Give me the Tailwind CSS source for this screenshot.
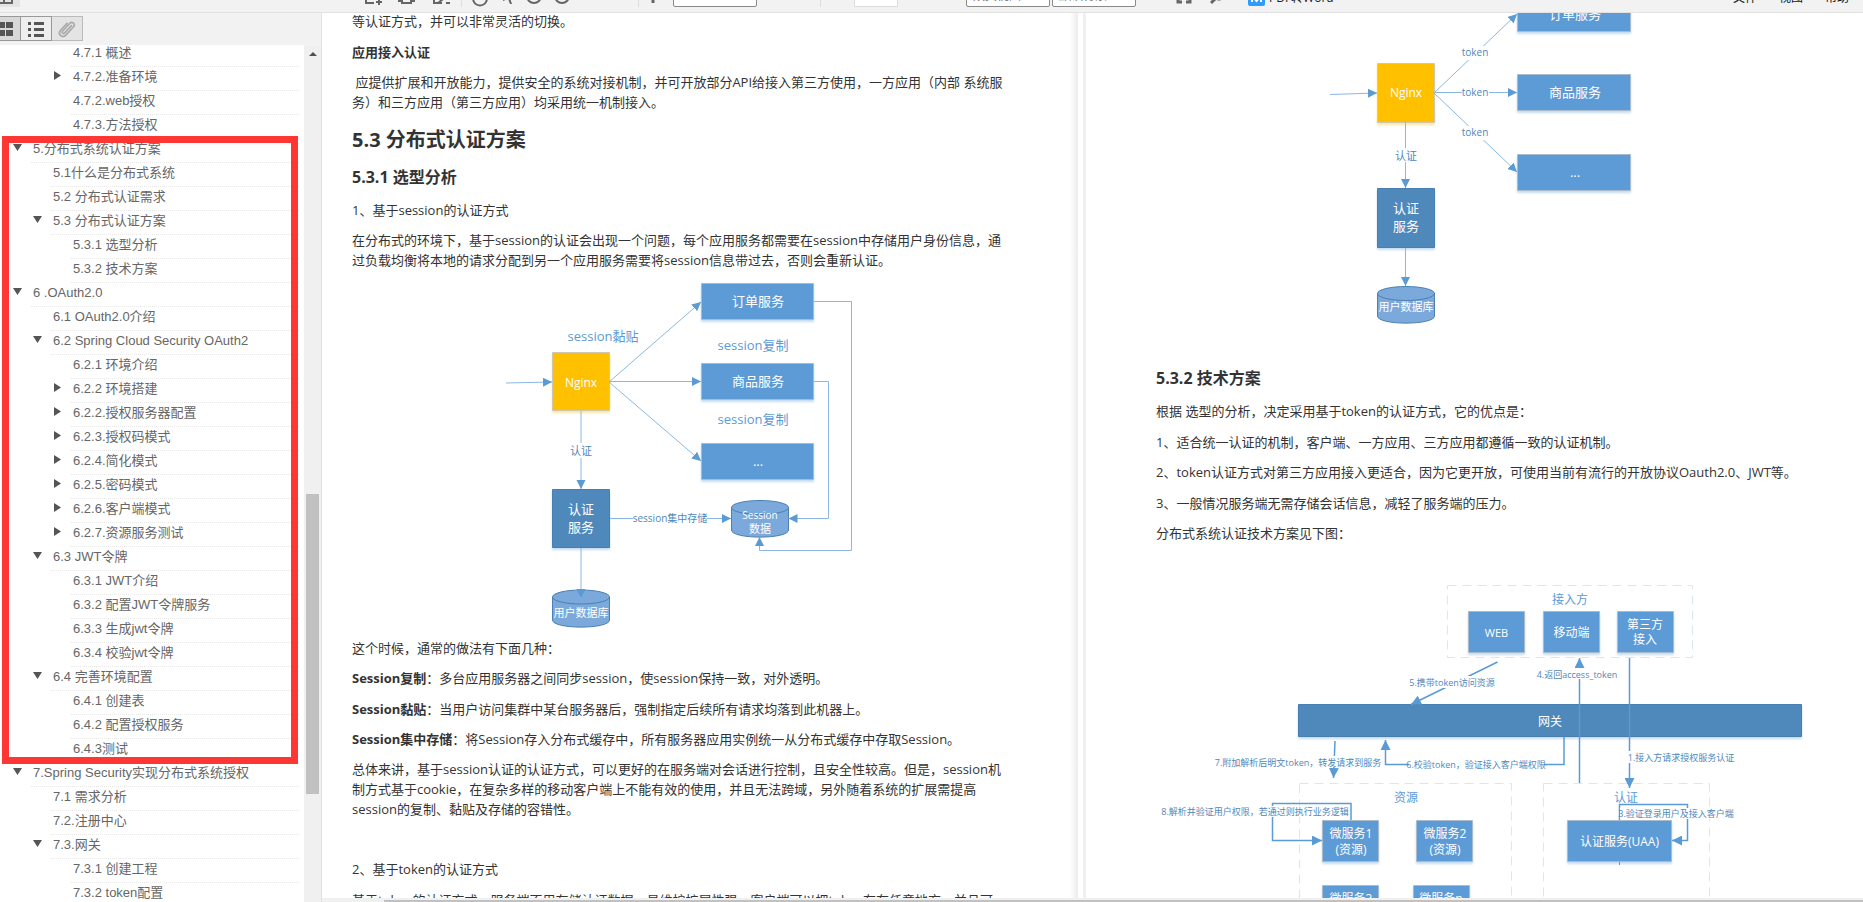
<!DOCTYPE html>
<html lang="zh-CN">
<head>
<meta charset="utf-8">
<title>PDF 阅读器</title>
<script src="https://cdn.jsdelivr.net/npm/@tailwindcss/browser@4"></script>
</head>
<body class="flex h-screen flex-col overflow-hidden bg-white font-['Open_Sans','Noto_Sans_CJK_SC',sans-serif] text-[13px] leading-5 text-[#333]">

<header class="flex h-[13px] shrink-0 items-end overflow-hidden border-b border-[#e2e2e2] bg-[#f2f2f2] text-[#666]">
  <div class="flex h-8 w-full shrink-0 items-end pb-[5px]">
    <button aria-label="侧边栏" class="flex h-7 w-5 items-end bg-[#e4e4e4] pb-[3px]"><svg class="h-4 w-[13px]" viewBox="0 0 13 16" fill="none" stroke="#666" stroke-width="2"><path d="M-3 2H12V15H-3M4 2V15"/></svg></button>
    <button aria-label="打开" class="ml-[345px]"><svg class="h-5 w-[18px]" viewBox="0 0 18 20" fill="none" stroke="#666" stroke-width="2"><path d="M9 16H1V4H8M14 10V18M11 15H17"/></svg></button>
    <button aria-label="打印" class="ml-[15px]"><svg class="h-5 w-[17px]" viewBox="0 0 17 20" fill="none" stroke="#666" stroke-width="2"><path d="M4 14H1V8H16V14H13M4 12H13V16H4Z"/></svg></button>
    <button aria-label="编辑" class="ml-[18px]"><svg class="h-5 w-[17px]" viewBox="0 0 17 20" fill="none" stroke="#666" stroke-width="2"><path d="M9 16H1V4H12M5 16L14 9M13 16H17"/></svg></button>
    <span class="ml-[11px] h-5 w-px bg-[#dcdcdc]"></span>
    <button aria-label="手型工具" class="ml-[10px]"><svg class="h-5 w-4" viewBox="0 0 16 20" fill="none" stroke="#666" stroke-width="2"><path d="M1 5V11C1 21 15 21 15 11V5"/></svg></button>
    <button aria-label="选择" class="ml-[15px]"><svg class="h-5 w-[10px]" viewBox="0 0 10 20" fill="#666"><path d="M0 0L10 10L7 11L9 17L7 17L5 12L0 14Z"/></svg></button>
    <button aria-label="缩小" class="ml-[13px]"><svg class="h-5 w-4" viewBox="0 0 16 20" fill="none" stroke="#666" stroke-width="2"><circle cx="8" cy="9" r="7"/></svg></button>
    <button aria-label="放大" class="ml-3"><svg class="h-5 w-4" viewBox="0 0 16 20" fill="none" stroke="#666" stroke-width="2"><circle cx="8" cy="9" r="7"/></svg></button>
    <span class="ml-[68px] h-5 w-px bg-[#dcdcdc]"></span>
    <button aria-label="上一页" class="ml-[11px]"><svg class="h-5 w-[6px]" viewBox="0 0 6 20" fill="none" stroke="#666" stroke-width="3"><path d="M3 4V16"/></svg></button>
    <input aria-label="页码" class="ml-[17px] h-[22px] w-[84px] rounded-xs border border-[#8a8a8a] bg-white">
    <span class="ml-[63px] h-5 w-px bg-[#dcdcdc]"></span>
    <input aria-label="缩放" class="ml-[33px] h-[22px] w-11 border border-[#ddd] bg-white">
    <select aria-label="视图" class="ml-[68px] h-[22px] w-[84px] appearance-none rounded-xs border border-[#8a8a8a] bg-white px-1.5 text-[12px]"><option>双页视图</option></select>
    <select aria-label="背景" class="ml-[2px] h-[22px] w-[84px] appearance-none rounded-xs border border-[#8a8a8a] bg-white px-1.5 text-[12px]"><option>默认背景</option></select>
    <button aria-label="全屏" class="ml-10"><svg class="h-5 w-4" viewBox="0 0 16 20" fill="none" stroke="#666" stroke-width="3"><path d="M6 15H2V9M10 15H14V9"/></svg></button>
    <button aria-label="查找" class="ml-[18px]"><svg class="h-5 w-[14px]" viewBox="0 0 14 20" fill="none" stroke="#666" stroke-width="3"><path d="M1 16L6 11"/><circle cx="9" cy="8" r="4"/></svg></button>
    <button class="ml-6 flex items-end gap-1 pb-px text-[12px] leading-4 text-[#222]"><svg class="h-[17px] w-[17px] rounded-xs" viewBox="0 0 17 17"><path fill="#2f9bff" d="M0 0H17V17H0Z"/><path d="M4 13V7L8.500 12L13 7V13" fill="none" stroke="#fff" stroke-width="2"/></svg>PDF转Word</button>
    <nav class="ml-auto flex gap-[22px] pr-[14px] pb-px text-[12px] leading-4 text-[#111]"><a href="#">文件</a><a href="#">视图</a><a href="#">帮助</a></nav>
  </div>
</header>

<div class="flex min-h-0 flex-1">
  <!-- Outline sidebar -->
  <aside class="relative flex w-[322px] shrink-0 flex-col border-r border-[#e2e2e2]">
    <div class="flex h-8 shrink-0 bg-[#f2f2f2] pt-[3px]">
      <button aria-label="缩略图" class="flex h-[25px] w-[21px] items-center border border-l-0 border-[#999] bg-[#d8d8d8]"><svg class="h-4 w-[14px]" viewBox="0 0 14 16" fill="#555"><path d="M-2 1H5V7H-2ZM6 1H13V7H6ZM-2 9H5V15H-2ZM6 9H13V15H6Z"/></svg></button>
      <button aria-label="目录" class="flex h-[25px] w-[31px] items-center justify-center border border-l-0 border-[#999] bg-[#eee]"><svg class="h-4 w-4" viewBox="0 0 16 16" fill="#555"><path d="M0 1H3V4H0ZM6 1H16V4H6ZM0 7H3V10H0ZM6 7H16V10H6ZM0 13H3V16H0ZM6 13H16V16H6Z"/></svg></button>
      <button aria-label="附件" class="flex h-[25px] w-[31px] items-center justify-center border border-l-0 border-[#bbb] bg-[#e4e4e4]"><svg class="h-[18px] w-[18px]" viewBox="0 0 16 16" fill="none" stroke="#aaa" stroke-width="1.500" stroke-linecap="round"><path d="M12 5L6 11.500C4.500 13 2.800 11.200 4 10L10.500 3C12.500 1 15.800 3.500 13.800 6L7 13.500C4 16.500 -.5 13 2 9.500L8 3"/></svg></button>
    </div>
    <div class="flex min-h-0 flex-1">
      <nav aria-label="目录" class="min-w-0 flex-1 overflow-hidden">
        <ul id="tree" class="-mt-0.5 font-['Liberation_Sans','Noto_Sans_CJK_SC',sans-serif] text-[13px] leading-5 text-[#666]"></ul>
      </nav>
      <div class="flex w-[17px] flex-col items-center bg-[#f0f0f0]">
        <svg class="mt-[7px] h-1 w-2 shrink-0" viewBox="0 0 8 4"><path d="M0 4L4 0L8 4Z" fill="#505050"/></svg>
        <div class="mt-[438px] h-[300px] w-[13px] bg-[#c1c1c1]"></div>
      </div>
    </div>
    <div class="pointer-events-none absolute top-[123px] left-[2px] h-[628px] w-[296px] border-7 border-[#fe3735]"></div>
  </aside>

  <!-- Two page spread -->
  <main class="flex min-w-0 flex-1 flex-col">
    <div class="grid min-h-0 flex-1 grid-cols-[756fr_8px_777fr] grid-rows-[minmax(0,1fr)] overflow-hidden">
      <article class="min-w-0 overflow-hidden bg-linear-to-l from-[#ececec] to-white to-[8px] pl-[30px] whitespace-nowrap">
        <p class="-mt-0.5">等认证方式，并可以非常灵活的切换。</p>
        <p class="mt-[11px] font-bold">应用接入认证</p>
        <p class="mt-2.5">&nbsp;应提供扩展和开放能力，提供安全的系统对接机制，并可开放部分API给接入第三方使用，一方应用（内部 系统服<br>务）和三方应用（第三方应用）均采用统一机制接入。</p>
        <h2 class="mt-[14px] text-[20px] leading-7 font-bold">5.3 分布式认证方案</h2>
        <h3 class="mt-[11px] text-[16px] leading-6 font-bold">5.3.1 选型分析</h3>
        <p class="mt-[11px]">1、基于session的认证方式</p>
        <p class="mt-2.5">在分布式的环境下，基于session的认证会出现一个问题，每个应用服务都需要在session中存储用户身份信息，通<br>过负载均衡将本地的请求分配到另一个应用服务需要将session信息带过去，否则会重新认证。</p>

        <svg class="mt-2.5 h-[350px] w-[649px]" viewBox="352 281 649 350" text-anchor="middle" dominant-baseline="central">
          <defs>
            <marker id="head" markerUnits="userSpaceOnUse" markerWidth="10" markerHeight="10" refX="9" refY="4.500" orient="auto"><path d="M0 0L9 4.500L0 9Z" fill="#5b9bd5"/></marker>
            <marker id="head2" markerUnits="userSpaceOnUse" markerWidth="10" markerHeight="10" refX="10" refY="5" orient="auto"><path d="M0 0L10 5L0 10Z" fill="#5b9bd5"/></marker>
            <filter id="sh" x="-10%" y="-10%" width="120%" height="130%"><feDropShadow dx="0" dy="2" stdDeviation="1" flood-color="#5b9bd5" flood-opacity=".35"/></filter>
            <filter id="shy" x="-10%" y="-10%" width="120%" height="130%"><feDropShadow dx="0" dy="2" stdDeviation="1" flood-color="#ffc000" flood-opacity=".4"/></filter>
          </defs>
          <g fill="#5b9bd5" stroke="#a9bccd" filter="url(#sh)">
            <path d="M701.500 284.500h112v36h-112ZM701.500 364.500h112v36h-112ZM701.500 444.500h112v36h-112Z"/>
            <path d="M552.500 490.500h57v58h-57Z" fill="#4f88bb" stroke="#4a7eb0"/>
          </g>
          <path d="M552.500 353.500h57v58h-57Z" fill="#ffc000" stroke="#cfc7b0" filter="url(#shy)"/>
          <g fill="#7ba9db" stroke="#4a80b3">
            <path d="M552.500 598V621C552.500 630.500 609.500 630.500 609.500 621V598"/><ellipse cx="581" cy="598" rx="28.500" ry="7"/>
            <path d="M731.500 508V531C731.500 540.500 788.500 540.500 788.500 531V508"/><ellipse cx="760" cy="508.500" rx="28.500" ry="7"/>
          </g>
          <g fill="none" stroke="#8ab8e2" marker-end="url(#head)">
            <path d="M506 384L552 383"/><path d="M609 383L701 303"/><path d="M609 382.500H701"/><path d="M609 383L701 462"/>
            <path d="M581 412V490"/><path d="M581 549V599"/><path d="M610 519.500H731"/>
            <path d="M814 302.500H851.500V551.500H759.500V538"/><path d="M814 382.500H828.500V519.500H788.500"/>
          </g>
          <g fill="#fff"><path d="M569 444h24v15h-24ZM633 513h74v13h-74Z"/></g>
          <g fill="#fff" font-size="13">
            <text x="758" y="302">订单服务</text><text x="758" y="382">商品服务</text><text x="758" y="462">...</text>
            <text x="581" y="383" font-size="12">Nginx</text>
            <text x="581" y="510">认证</text><text x="581" y="528">服务</text>
            <text x="581" y="613" font-size="11">用户数据库</text><text x="760" y="516" font-size="10">Session</text><text x="760" y="529" font-size="11">数据</text>
          </g>
          <g fill="#5b9bd5" font-size="13"><text x="603" y="337">session黏贴</text><text x="753" y="346">session复制</text><text x="753" y="420">session复制</text></g>
          <g fill="#4f88bb"><text x="581" y="451" font-size="11">认证</text><text x="670" y="519" font-size="10">session集中存储</text></g>
        </svg>

        <p class="mt-2">这个时候，通常的做法有下面几种：</p>
        <p class="mt-2.5"><b>Session复制</b>：多台应用服务器之间同步session，使session保持一致，对外透明。</p>
        <p class="mt-[11px]"><b>Session黏贴</b>：当用户访问集群中某台服务器后，强制指定后续所有请求均落到此机器上。</p>
        <p class="mt-2.5"><b>Session集中存储</b>：将Session存入分布式缓存中，所有服务器应用实例统一从分布式缓存中存取Session。</p>
        <p class="mt-2.5">总体来讲，基于session认证的认证方式，可以更好的在服务端对会话进行控制，且安全性较高。但是，session机<br>制方式基于cookie，在复杂多样的移动客户端上不能有效的使用，并且无法跨域，另外随着系统的扩展需提高<br>session的复制、黏贴及存储的容错性。</p>
        <p class="mt-10">2、基于token的认证方式</p>
        <p class="mt-[11px]">基于token的认证方式，服务端不用存储认证数据，易维护扩展性强，客户端可以把token存在任意地方，并且可</p>
      </article>

      <div class="border-r-3 border-[#f0f0f0]"></div>

      <article class="min-w-0 overflow-hidden pl-[70px] whitespace-nowrap">
        <svg class="h-[315px] w-[654px]" viewBox="1156 13 654 315" text-anchor="middle" dominant-baseline="central">
          <g fill="#5b9bd5" stroke="#a9bccd" filter="url(#sh)">
            <path d="M1517.500 -5.500h113v37h-113ZM1517.500 74.500h113v36h-113ZM1517.500 154.500h113v36h-113Z"/>
            <path d="M1377.500 188.500h57v59h-57Z" fill="#4f88bb" stroke="#4a7eb0"/>
          </g>
          <path d="M1377.500 63.500h57v59h-57Z" fill="#ffc000" stroke="#cfc7b0" filter="url(#shy)"/>
          <g fill="#7ba9db" stroke="#4a80b3"><path d="M1377.500 293V316C1377.500 325.500 1434.500 325.500 1434.500 316V293"/><ellipse cx="1406" cy="293.500" rx="28.500" ry="7"/></g>
          <g fill="none" stroke="#8ab8e2" marker-end="url(#head)">
            <path d="M1330 94.500L1377 93"/><path d="M1434 93L1517 14"/><path d="M1434 92.500H1517"/><path d="M1434 93L1517 172"/>
            <path d="M1405.500 122V188"/><path d="M1405.500 248V286"/>
          </g>
          <path d="M1462 46h27v14h-27ZM1462 86h27v14h-27ZM1462 126h27v14h-27ZM1394 148h24v14h-24Z" fill="#fff"/>
          <g fill="#fff" font-size="13">
            <text x="1575" y="14">订单服务</text><text x="1575" y="92">商品服务</text><text x="1575" y="172">...</text>
            <text x="1406" y="92" font-size="12">Nginx</text><text x="1406" y="208">认证</text><text x="1406" y="226">服务</text>
            <text x="1406" y="306" font-size="11">用户数据库</text>
          </g>
          <g fill="#4f88bb" font-size="10"><text x="1475" y="52">token</text><text x="1475" y="92">token</text><text x="1475" y="132">token</text><text x="1406" y="155" font-size="11">认证</text></g>
        </svg>

        <h3 class="mt-[38px] text-[16px] leading-6 font-bold">5.3.2 技术方案</h3>
        <p class="mt-[11px]">根据 选型的分析，决定采用基于token的认证方式，它的优点是：</p>
        <p class="mt-[11px]">1、适合统一认证的机制，客户端、一方应用、三方应用都遵循一致的认证机制。</p>
        <p class="mt-2.5">2、token认证方式对第三方应用接入更适合，因为它更开放，可使用当前有流行的开放协议Oauth2.0、JWT等。</p>
        <p class="mt-[11px]">3、一般情况服务端无需存储会话信息，减轻了服务端的压力。</p>
        <p class="mt-2.5">分布式系统认证技术方案见下图：</p>

        <svg class="mt-10 h-[340px] w-[654px]" viewBox="1156 584 654 340" text-anchor="middle" dominant-baseline="central">
          <g fill="none" stroke="#dbe6f3" stroke-dasharray="9 6">
            <path d="M1447.500 586.500H1692.500V658.500H1447.500Z"/><path d="M1299.500 784.500H1511.500V930H1299.500Z"/><path d="M1543.500 784.500H1709.500V930H1543.500Z"/>
          </g>
          <g fill="#5b9bd5" stroke="#a9bccd" filter="url(#sh)">
            <path d="M1468.500 612.500h56v41h-56ZM1543.500 612.500h56v41h-56ZM1617.500 612.500h56v41h-56Z"/>
            <path d="M1322.500 821.500h56v41h-56ZM1416.500 821.500h56v41h-56ZM1322.500 886.500h56v41h-56ZM1413.500 886.500h56v41h-56ZM1567.500 821.500h104v41h-104Z"/>
            <path d="M1298.500 705.500h503v32h-503Z" fill="#4f88bb" stroke="#4a7eb0"/>
          </g>
          <g fill="none" stroke="#5b9bd5" stroke-width="1.500" marker-end="url(#head2)">
            <path d="M1497.500 663L1411 705.500"/><path d="M1579.500 784V659"/><path d="M1629.500 659V789"/>
            <path d="M1564 738V765.500H1385.500V741"/><path d="M1335 742L1333.500 779"/>
            <path d="M1351 821V804.500H1272.500V841.500H1322"/><path d="M1619.500 821V805.500H1687.500V841.500H1672"/>
          </g>
          <path d="M1619.500 863V866" stroke="#5b9bd5"/>
          <path d="M1411 677h82v12h-82ZM1540 669h74v11h-74ZM1628 752h105v12h-105ZM1217 757h161v11h-161ZM1409 759h135v12h-135ZM1161 807h187v11h-187ZM1620 809h113v11h-113Z" fill="#fff"/>
          <g fill="#5b9bd5" font-size="12"><text x="1570" y="600">接入方</text><text x="1406" y="798">资源</text><text x="1626" y="798">认证</text></g>
          <g fill="#fff" font-size="12">
            <text x="1496.500" y="633" font-size="11">WEB</text><text x="1571.500" y="633">移动端</text><text x="1645" y="625">第三方</text><text x="1645" y="640">接入</text>
            <text x="1550" y="722">网关</text>
            <text x="1351" y="834">微服务1</text><text x="1351" y="850">(资源)</text><text x="1445" y="834">微服务2</text><text x="1445" y="850">(资源)</text>
            <text x="1351" y="899">微服务3</text><text x="1441" y="899">微服务n</text><text x="1619.500" y="842">认证服务(UAA)</text>
          </g>
          <g fill="#4f88bb" font-size="9">
            <text x="1452" y="683">5.携带token访问资源</text><text x="1577" y="675">4.返回access_token</text><text x="1681" y="758">1.接入方请求授权服务认证</text>
            <text x="1298" y="763">7.附加解析后明文token，转发请求到服务</text><text x="1476" y="765">6.校验token，验证接入客户端权限</text>
            <text x="1255" y="812">8.解析并验证用户权限，若通过则执行业务逻辑</text><text x="1676" y="814">3.验证登录用户及接入客户端</text>
          </g>
        </svg>
      </article>
    </div>
    <div class="flex h-1 shrink-0 items-end bg-[#f0f0f0] pl-[62px]"><div class="h-0.5 flex-1 bg-[#c1c1c1]"></div></div>
  </main>
</div>

<script>
  // Each entry: level, state ('o' open, 'c' closed, '' leaf), title
  const rows = [
    [2,'','4.7.1 概述'],[2,'c','4.7.2.准备环境'],[2,'','4.7.2.web授权'],[2,'','4.7.3.方法授权'],
    [0,'o','5.分布式系统认证方案'],[1,'','5.1什么是分布式系统'],[1,'','5.2 分布式认证需求'],[1,'o','5.3 分布式认证方案'],
    [2,'','5.3.1 选型分析'],[2,'','5.3.2 技术方案'],[0,'o','6 .OAuth2.0'],[1,'','6.1 OAuth2.0介绍'],
    [1,'o','6.2 Spring Cloud Security OAuth2'],[2,'','6.2.1 环境介绍'],[2,'c','6.2.2 环境搭建'],[2,'c','6.2.2.授权服务器配置'],
    [2,'c','6.2.3.授权码模式'],[2,'c','6.2.4.简化模式'],[2,'c','6.2.5.密码模式'],[2,'c','6.2.6.客户端模式'],[2,'c','6.2.7.资源服务测试'],
    [1,'o','6.3 JWT令牌'],[2,'','6.3.1 JWT介绍'],[2,'','6.3.2 配置JWT令牌服务'],[2,'','6.3.3 生成jwt令牌'],[2,'','6.3.4 校验jwt令牌'],
    [1,'o','6.4 完善环境配置'],[2,'','6.4.1 创建表'],[2,'','6.4.2 配置授权服务'],[2,'','6.4.3测试'],
    [0,'o','7.Spring Security实现分布式系统授权'],[1,'','7.1 需求分析'],[1,'','7.2.注册中心'],[1,'o','7.3.网关'],
    [2,'','7.3.1 创建工程'],[2,'','7.3.2 token配置']
  ];
  const indent = ['pl-[13px]', 'pl-[33px]', 'pl-[53px]'];
  const shape = { o: 'M0 1H9L4.5 8Z', c: 'M1 0L8 4.5L1 9Z' };
  document.getElementById('tree').innerHTML = rows.map(([level, state, title]) => `
    <li class="flex h-6 pr-[5px] ${indent[level]}">
      ${state ? `<button aria-label="展开或折叠" class="flex w-[18px] shrink-0 pt-1"><svg class="h-[9px] w-[9px]" viewBox="0 0 9 9"><path d="${shape[state]}" fill="#555"/></svg></button>` : '<span class="w-[18px] shrink-0"></span>'}
      <a href="#" class="block flex-1 border-b border-dotted border-[#e8e8e8] pl-0.5 whitespace-nowrap">${title}</a>
    </li>`).join('');
</script>
</body>
</html>
